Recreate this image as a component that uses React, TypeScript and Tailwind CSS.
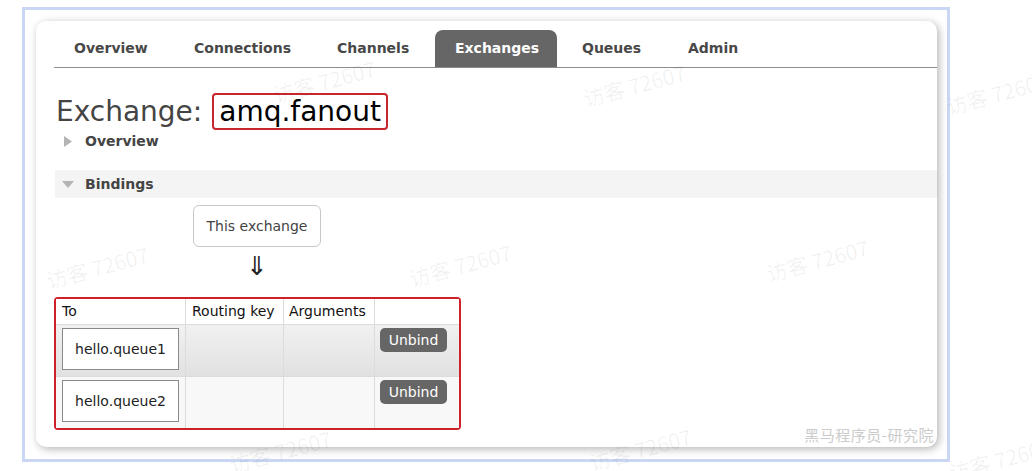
const tabs = [
  { label: "Overview", w: "w-[115px]" },
  { label: "Connections", w: "w-[138px]" },
  { label: "Channels", w: "w-[113px]" },
  { label: "Exchanges", w: "w-[122px]", active: true },
  { label: "Queues", w: "w-[101px]" },
  { label: "Admin", w: "w-[90px]" },
];

const marks = [
  "left-[272px] top-[66px]",
  "left-[582px] top-[70px]",
  "left-[945px] top-[78px]",
  "left-[45px] top-[252px]",
  "left-[408px] top-[250px]",
  "left-[765px] top-[245px]",
  "left-[228px] top-[436px]",
  "left-[588px] top-[434px]",
  "left-[948px] top-[444px]",
];

function Row({ queue, shade }: { queue: string; shade: string }) {
  return (
    <div className={`grid grid-cols-[130px_98px_91px_84px] ${shade}`}>
      <div className="border-r border-[#dcdcdc] pl-[6px] pt-[3px] pb-[6px]">
        <div className="w-[117px] h-[42px] bg-white border border-[#8a8a8a] flex items-center justify-center text-[14px] text-[#222]">
          {queue}
        </div>
      </div>
      <div className="border-r border-[#dcdcdc]"></div>
      <div className="border-r border-[#dcdcdc]"></div>
      <div className="pl-[5px] pt-[3px]">
        <div className="w-[67px] h-[24px] rounded-[5px] bg-[#666] text-white text-[14px] flex items-center justify-center">
          Unbind
        </div>
      </div>
    </div>
  );
}

export default function App() {
  return (
    <div className="relative w-[1032px] h-[471px] bg-white overflow-hidden font-['DejaVu_Sans',sans-serif] text-[#444]">
      <div className="ml-[22px] mt-[7px] w-[928px] h-[455px] border-[3px] border-[#c9d7f4] pt-[11px] pl-[11px]">
        <div className="relative w-[901px] h-[426px] bg-white rounded-[10px] shadow-[2px_2px_9px_rgba(0,0,0,0.3)] pl-[19px] pt-[9px]">
          {/* tabs */}
          <div className="flex gap-[5px] border-b border-[#8c8c8c] h-[38px] -ml-px">
            {tabs.map((t) => (
              <div
                key={t.label}
                className={`${t.w} h-[37px] pl-[20px] flex items-center text-[14px] font-bold ${
                  t.active ? "bg-[#666] text-white rounded-t-[8px]" : "text-[#484848]"
                }`}
              >
                {t.label}
              </div>
            ))}
          </div>

          {/* heading */}
          <div className="mt-[25px] h-[37px] flex items-center text-[28px] leading-none">
            <span className="ml-px text-[#444]">Exchange:</span>
            <span className="ml-[10px] h-[37px] px-[5px] flex items-center border-2 border-[#c8262e] rounded-[4px] text-black">
              amq.fanout
            </span>
          </div>

          <div className="mt-[2px] h-[18px] flex items-center text-[14px] font-bold text-[#444]">
            <svg width="8" height="11" viewBox="0 0 8 11" className="ml-[9px]">
              <polygon points="0,0 8,5.5 0,11" fill="#b4b4b4" />
            </svg>
            <span className="ml-[13px]">Overview</span>
          </div>

          <div className="mt-[20px] h-[28px] bg-[#f4f4f4] flex items-center text-[14px] font-bold text-[#444]">
            <svg width="12" height="7" viewBox="0 0 12 7" className="ml-[7px]">
              <polygon points="0,0 12,0 6,7" fill="#b4b4b4" />
            </svg>
            <span className="ml-[11px]">Bindings</span>
          </div>

          <div className="mt-[7px] ml-[138px] w-[128px] h-[42px] border border-[#c8c8c8] rounded-[6px] flex items-center justify-center text-[14px] text-[#444]">
            This exchange
          </div>
          <div className="ml-[138px] w-[128px] h-[50px] pt-[6px] flex justify-center text-[26px] leading-[26px] text-[#222]">
            ⇓
          </div>

          {/* bindings table */}
          <div className="-ml-px w-[407px] border-2 border-[#cf2029] rounded-[4px] text-[14px] text-[#111]">
            <div className="grid grid-cols-[130px_98px_91px_84px] h-[26px] bg-white border-b border-[#dcdcdc]">
              <div className="border-r border-[#dcdcdc] pl-[6px] leading-[25px]">To</div>
              <div className="border-r border-[#dcdcdc] pl-[6px] leading-[25px]">Routing key</div>
              <div className="border-r border-[#dcdcdc] pl-[5px] leading-[25px]">Arguments</div>
              <div></div>
            </div>
            <div className="border-b border-[#dcdcdc]">
              <Row queue="hello.queue1" shade="bg-gradient-to-b from-[#f1f1f1] to-[#e1e1e1]" />
            </div>
            <Row queue="hello.queue2" shade="bg-[#f8f8f8]" />
          </div>

          <div className="absolute right-[3px] bottom-[1px] text-[15px] tracking-[0.5px] text-[#cbcbcb] font-['Noto_Sans_CJK_SC',sans-serif]">
            黑马程序员-研究院
          </div>
        </div>
      </div>

      {marks.map((m) => (
        <div
          key={m}
          className={`pointer-events-none absolute ${m} -rotate-[15deg] text-[21px] text-black/[0.06] font-['Noto_Sans_CJK_SC',sans-serif] whitespace-nowrap`}
        >
          访客 72607
        </div>
      ))}
    </div>
  );
}
